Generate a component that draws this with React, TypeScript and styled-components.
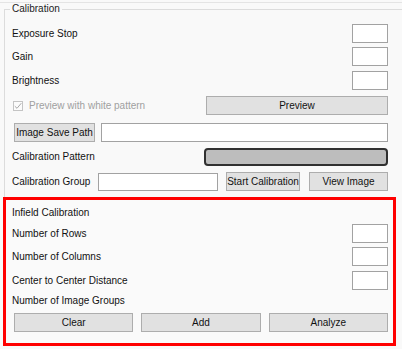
import React from 'react';
import styled, { createGlobalStyle } from 'styled-components';

const GlobalStyle = createGlobalStyle`
  html, body {
    margin: 0;
    padding: 0;
    background: #f9f9f9;
    overflow: hidden;
  }
  body {
    font-family: "Liberation Sans", Arial, sans-serif;
    font-size: 10px;
    color: #111;
  }
`;

const Window = styled.div`
  width: 402px;
  height: 349px;
  overflow: hidden;
  background: #f9f9f9;
`;

const TopRule = styled.div`
  height: 1px;
  margin-top: 2px;
  background: #e4e4e4;
`;

const GroupBox = styled.fieldset`
  margin: 0 0 0 4px;
  padding: 9px 0 0 7px;
  width: 420px;
  border: 1px solid #dcdcdc;
  border-bottom: none;
  box-sizing: border-box;
  min-width: 0;
`;

const Legend = styled.legend`
  margin-left: -2px;
  padding: 0 2px;
  line-height: 12px;
  font-size: 10px;
  color: #222;
`;

const Content = styled.div`
  width: 376px;
  display: flex;
  flex-direction: column;
`;

const Row = styled.div<{ $gap?: number; $h?: number }>`
  display: flex;
  align-items: center;
  justify-content: space-between;
  height: ${(p) => p.$h ?? 19}px;
  margin-top: ${(p) => p.$gap ?? 0}px;
`;

const Label = styled.span<{ $grow?: boolean }>`
  white-space: nowrap;
  line-height: 14px;
  flex: ${(p) => (p.$grow ? '1 1 auto' : '0 0 auto')};
`;

const SmallInput = styled.div`
  width: 36px;
  height: 19px;
  box-sizing: border-box;
  background: #fff;
  border: 1px solid #a2a2a2;
`;

const LineInput = styled.div<{ $w?: number; $h?: number }>`
  height: ${(p) => p.$h ?? 19}px;
  box-sizing: border-box;
  background: #fff;
  border: 1px solid #a2a2a2;
  ${(p) => (p.$w ? `width: ${p.$w}px; flex: 0 0 auto;` : 'flex: 1 1 auto;')}
`;

const Button = styled.div<{ $w?: number; $ml?: number }>`
  height: 19px;
  box-sizing: border-box;
  background: #e1e1e1;
  border: 1px solid #adadad;
  display: flex;
  align-items: center;
  justify-content: center;
  white-space: nowrap;
  color: #111;
  margin-left: ${(p) => p.$ml ?? 0}px;
  ${(p) => (p.$w ? `width: ${p.$w}px; flex: 0 0 auto;` : 'flex: 1 1 0;')}
`;

const CheckWrap = styled.label`
  display: flex;
  align-items: center;
  gap: 6px;
  color: #a0a0a0;
  margin-left: 1px;
`;

const CheckBox = styled.span`
  width: 10px;
  height: 10px;
  box-sizing: border-box;
  border: 1px solid #c4c4c4;
  background: #fbfbfb;
  display: flex;
  align-items: center;
  justify-content: center;
`;

const PatternBox = styled.div`
  width: 184px;
  height: 18px;
  box-sizing: border-box;
  background: #bdbdbd;
  border: 2px solid #303030;
  border-radius: 4px;
`;

const Infield = styled.section`
  margin: 6px -8px 0 -9px;
  padding: 6px 5px 11px 6px;
  border: 3px solid #ff0000;
  background: #fafafa;
  display: flex;
  flex-direction: column;
`;

const ButtonBar = styled.div`
  display: flex;
  gap: 8px;
  height: 19px;
  margin-top: 5px;
  padding-left: 2px;
`;

const Padded = styled(Row)`
  justify-content: flex-start;
  padding-left: 2px;
  gap: 6px;
`;

export default function App() {
  return (
    <Window>
      <GlobalStyle />
      <TopRule />
      <GroupBox>
        <Legend>Calibration</Legend>
        <Content>
          <Row>
            <Label>Exposure Stop</Label>
            <SmallInput />
          </Row>
          <Row $gap={4}>
            <Label>Gain</Label>
            <SmallInput />
          </Row>
          <Row $gap={5}>
            <Label>Brightness</Label>
            <SmallInput />
          </Row>
          <Row $gap={6}>
            <CheckWrap>
              <CheckBox>
                <svg width="8" height="8" viewBox="0 0 8 8">
                  <path d="M0.8 4.2 L3 6.3 L7.3 1.2" fill="none" stroke="#a8a8a8" strokeWidth="1" />
                </svg>
              </CheckBox>
              Preview with white pattern
            </CheckWrap>
            <Button $w={182}>Preview</Button>
          </Row>
          <Padded $gap={8}>
            <Button $w={81}>Image Save Path</Button>
            <LineInput />
          </Padded>
          <Row $gap={6} $h={18}>
            <Label>Calibration Pattern</Label>
            <PatternBox />
          </Row>
          <Row $gap={6}>
            <Label $grow>Calibration Group</Label>
            <LineInput $w={120} $h={18} />
            <Button $w={74} $ml={8}>Start Calibration</Button>
            <Button $w={79} $ml={9}>View Image</Button>
          </Row>
          <Infield>
            <Row $h={14}>
              <Label>Infield Calibration</Label>
            </Row>
            <Row $gap={4}>
              <Label>Number of Rows</Label>
              <SmallInput />
            </Row>
            <Row $gap={4}>
              <Label>Number of Columns</Label>
              <SmallInput />
            </Row>
            <Row $gap={5}>
              <Label>Center to Center Distance</Label>
              <SmallInput />
            </Row>
            <Row $gap={4} $h={14}>
              <Label>Number of Image Groups</Label>
            </Row>
            <ButtonBar>
              <Button>Clear</Button>
              <Button>Add</Button>
              <Button>Analyze</Button>
            </ButtonBar>
          </Infield>
        </Content>
      </GroupBox>
    </Window>
  );
}
